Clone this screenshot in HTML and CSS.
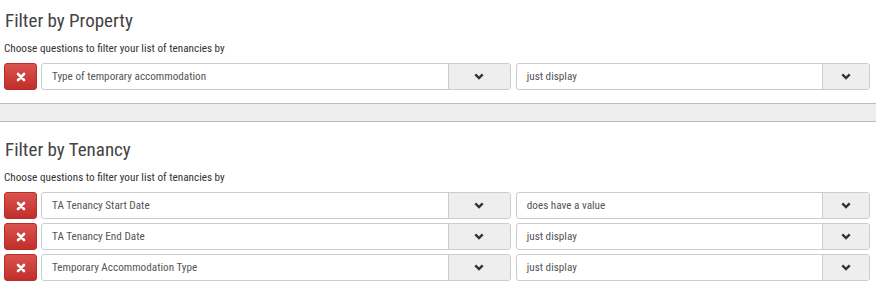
FILE: index.html
```html
<!DOCTYPE html>
<html lang="en">

<head>
  <meta charset="UTF-8">
  <meta name="viewport" content="width=device-width, initial-scale=1.0">
  <title>Filters</title>
  <link rel="stylesheet" href="styles.css">
</head>

<body>
  <!-- property filters -->
  <div class="filter-group first">
    <h2>Filter by Property</h2>
    <p class="hint">Choose questions to filter your list of tenancies by</p>
    <div class="filter-row">
      <button class="remove" type="button">
        <svg viewBox="0 0 10 10" width="10" height="10"><path d="M2 2L8 8M8 2L2 8" stroke="#fff" stroke-width="2.6" stroke-linecap="round"/></svg>
      </button>
      <div class="select question">
        <span class="value">Type of temporary accommodation</span>
        <span class="arrow"><svg viewBox="0 0 10 7" width="10" height="7"><path d="M1.3 1.3L5 5L8.7 1.3" fill="none" stroke="#333" stroke-width="2.4"/></svg></span>
      </div>
      <div class="select condition">
        <span class="value">just display</span>
        <span class="arrow"><svg viewBox="0 0 10 7" width="10" height="7"><path d="M1.3 1.3L5 5L8.7 1.3" fill="none" stroke="#333" stroke-width="2.4"/></svg></span>
      </div>
    </div>
  </div>

  <div class="divider"></div>

  <!-- tenancy filters -->
  <div class="filter-group">
    <h2>Filter by Tenancy</h2>
    <p class="hint">Choose questions to filter your list of tenancies by</p>
    <div class="filter-row">
      <button class="remove" type="button">
        <svg viewBox="0 0 10 10" width="10" height="10"><path d="M2 2L8 8M8 2L2 8" stroke="#fff" stroke-width="2.6" stroke-linecap="round"/></svg>
      </button>
      <div class="select question">
        <span class="value">TA Tenancy Start Date</span>
        <span class="arrow"><svg viewBox="0 0 10 7" width="10" height="7"><path d="M1.3 1.3L5 5L8.7 1.3" fill="none" stroke="#333" stroke-width="2.4"/></svg></span>
      </div>
      <div class="select condition">
        <span class="value">does have a value</span>
        <span class="arrow"><svg viewBox="0 0 10 7" width="10" height="7"><path d="M1.3 1.3L5 5L8.7 1.3" fill="none" stroke="#333" stroke-width="2.4"/></svg></span>
      </div>
    </div>
    <div class="filter-row">
      <button class="remove" type="button">
        <svg viewBox="0 0 10 10" width="10" height="10"><path d="M2 2L8 8M8 2L2 8" stroke="#fff" stroke-width="2.6" stroke-linecap="round"/></svg>
      </button>
      <div class="select question">
        <span class="value">TA Tenancy End Date</span>
        <span class="arrow"><svg viewBox="0 0 10 7" width="10" height="7"><path d="M1.3 1.3L5 5L8.7 1.3" fill="none" stroke="#333" stroke-width="2.4"/></svg></span>
      </div>
      <div class="select condition">
        <span class="value">just display</span>
        <span class="arrow"><svg viewBox="0 0 10 7" width="10" height="7"><path d="M1.3 1.3L5 5L8.7 1.3" fill="none" stroke="#333" stroke-width="2.4"/></svg></span>
      </div>
    </div>
    <div class="filter-row">
      <button class="remove" type="button">
        <svg viewBox="0 0 10 10" width="10" height="10"><path d="M2 2L8 8M8 2L2 8" stroke="#fff" stroke-width="2.6" stroke-linecap="round"/></svg>
      </button>
      <div class="select question">
        <span class="value">Temporary Accommodation Type</span>
        <span class="arrow"><svg viewBox="0 0 10 7" width="10" height="7"><path d="M1.3 1.3L5 5L8.7 1.3" fill="none" stroke="#333" stroke-width="2.4"/></svg></span>
      </div>
      <div class="select condition">
        <span class="value">just display</span>
        <span class="arrow"><svg viewBox="0 0 10 7" width="10" height="7"><path d="M1.3 1.3L5 5L8.7 1.3" fill="none" stroke="#333" stroke-width="2.4"/></svg></span>
      </div>
    </div>
  </div>
</body>

</html>
```

FILE: styles.css
```css
body {
  margin: 0;
  background-color: white;
  font-family: "Roboto Condensed", "Liberation Sans Narrow", Roboto, sans-serif;
  color: #333;
}

.filter-group {
  padding: 17px 6px 0 4px;
}

.filter-group.first {
  padding-top: 10px;
}

.filter-group h2 {
  margin: 0 0 0 1px;
  font-size: 19px;
  line-height: 22px;
  font-weight: normal;
  color: #444;
}

.filter-group .hint {
  margin: 9px 0 7px;
  font-size: 11.2px;
  line-height: 15px;
  color: #333;
}

.filter-row {
  display: flex;
  height: 27px;
  margin-bottom: 4px;
}

.remove {
  width: 33px;
  height: 27px;
  margin-right: 4px;
  padding: 0;
  border: 1px solid #b92c28;
  border-radius: 3px;
  background: linear-gradient(to bottom, #d9534f 0, #c12e2a 100%);
  display: flex;
  align-items: center;
  justify-content: center;
}

.select {
  display: flex;
  box-sizing: border-box;
  height: 27px;
  border: 1px solid #ccc;
  border-radius: 3px;
  background: white;
  font-size: 11.2px;
  color: #555;
}

.select.question {
  flex: 470 1 0;
  margin-right: 5px;
}

.select.condition {
  flex: 354 1 0;
}

.select .value {
  flex: 1;
  padding-left: 10px;
  line-height: 25px;
  white-space: nowrap;
  overflow: hidden;
}

.select .arrow {
  width: 61px;
  background-color: #eee;
  border-left: 1px solid #ccc;
  border-radius: 0 2px 2px 0;
  display: flex;
  align-items: center;
  justify-content: center;
}

.select.condition .arrow {
  width: 46px;
}

.divider {
  margin-top: 13px;
  height: 17px;
  background-color: #eee;
  border-top: 1px solid #bbb;
  border-bottom: 1px solid #bbb;
}
```
